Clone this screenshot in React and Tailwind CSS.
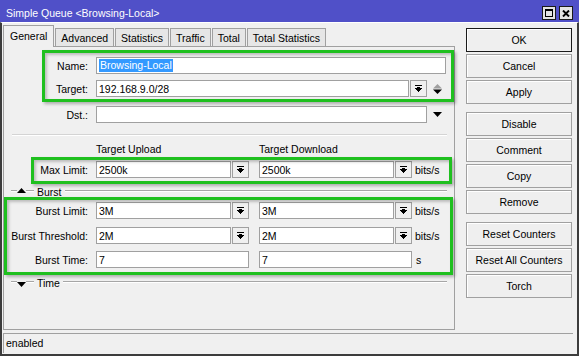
const FONT = "font-['Liberation_Sans',Arial,sans-serif]";

function DropIcon() {
  return (
    <svg width="7" height="7" viewBox="0 0 7 7" shapeRendering="crispEdges">
      <rect x="0" y="0" width="7" height="1" fill="#000" />
      <rect x="2" y="2" width="3" height="1" fill="#000" />
      <rect x="0" y="3" width="7" height="1" fill="#000" />
      <rect x="1" y="4" width="5" height="1" fill="#000" />
      <rect x="2" y="5" width="3" height="1" fill="#000" />
      <rect x="3" y="6" width="1" height="1" fill="#000" />
    </svg>
  );
}

function DropBtn() {
  return (
    <div className="ml-[1px] w-[17px] h-[17px] shrink-0 border border-[#a0a0a0] bg-[#f0f0f0] flex items-center justify-center">
      <DropIcon />
    </div>
  );
}

function Field({ className, children }) {
  return (
    <div
      className={`h-[17px] shrink-0 bg-white border border-[#a0a0a0] pl-[2px] flex items-center whitespace-nowrap overflow-hidden ${className}`}
    >
      {children}
    </div>
  );
}

function DropField({ value }) {
  return (
    <div className="flex w-[153px] shrink-0">
      <Field className="w-[135px]">{value}</Field>
      <DropBtn />
    </div>
  );
}

function Row({ label, className, children }) {
  return (
    <div className={`flex items-center h-[17px] shrink-0 ${className}`}>
      <div className="w-[84px] text-right shrink-0 whitespace-nowrap">{label}</div>
      <div className="ml-[8px] flex items-center">{children}</div>
    </div>
  );
}

function Etched({ className }) {
  return <div className={`h-[2px] border-t border-t-[#a6a6a6] border-b border-b-white ${className}`} />;
}

function GroupHeader({ label, up, className }) {
  return (
    <div className={`flex items-start h-[12px] shrink-0 pl-[7px] pr-[7px] ${className}`}>
      <Etched className="w-[6px] mt-[4px]" />
      {up ? (
        <svg className="mt-[2px]" width="9" height="5" viewBox="0 0 9 5">
          <polygon points="0,5 9,5 4.5,0" fill="#000" />
        </svg>
      ) : (
        <svg className="mt-[5px]" width="9" height="5" viewBox="0 0 9 5">
          <polygon points="0,0 9,0 4.5,5" fill="#000" />
        </svg>
      )}
      <Etched className="w-[8px] mt-[4px]" />
      <div className="ml-[3px]">{label}</div>
      <Etched className="flex-1 ml-[3px] mt-[4px]" />
    </div>
  );
}

function Btn({ children, def }) {
  return (
    <div
      className={`h-[24px] w-[106px] border ${def ? "border-[#1a1a1a]" : "border-[#a0a0a0]"} bg-[#efefef] shadow-[inset_1px_1px_0_#ffffff] flex items-center justify-center whitespace-nowrap`}
    >
      {children}
    </div>
  );
}

const greenBox =
  "absolute border-[3px] border-[#1fc01f] pointer-events-none shadow-[2px_2px_3px_rgba(0,0,0,0.28),inset_2px_2px_3px_rgba(0,0,0,0.22)]";

export default function App() {
  return (
    <div
      className={`${FONT} w-[579px] h-[356px] flex flex-col text-[10.5px] leading-[12px] text-black bg-[#f0f0f0] overflow-hidden`}
    >
      {/* Title bar */}
      <div className="h-[22px] shrink-0 bg-[#5050c8] flex items-start">
        <div className="pl-[6px] pt-[7px] text-white whitespace-nowrap">Simple Queue &lt;Browsing-Local&gt;</div>
        <div className="ml-auto mt-[6px] mr-[6px] flex gap-[3px]">
          <div className="w-[14px] h-[14px] border border-[#1a1a1a] bg-[#e4e4e4] flex items-center justify-center">
            <svg width="8" height="8" viewBox="0 0 8 8" shapeRendering="crispEdges">
              <rect x="0.5" y="0.5" width="7" height="7" fill="none" stroke="#000" />
              <rect x="0" y="0" width="8" height="2" fill="#000" />
            </svg>
          </div>
          <div className="w-[14px] h-[14px] border border-[#1a1a1a] bg-[#e4e4e4] flex items-center justify-center">
            <svg width="8" height="7" viewBox="0 0 8 7">
              <path d="M1 0.5 L7 6.5 M7 0.5 L1 6.5" stroke="#000" strokeWidth="1.9" />
            </svg>
          </div>
        </div>
      </div>

      {/* Body */}
      <div className="flex-1 flex flex-col border-x-2 border-b-2 border-[#3c3c3c] border-t border-t-white pt-[2px]">
        <div className="h-[305px] flex pl-[1px]">
          {/* Left column: tabs + panel */}
          <div className="w-[452px] flex flex-col">
            <div className="h-[21px] flex items-end">
              <div className="h-[22px] -mb-[1px] relative z-10 border border-b-0 border-[#a0a0a0] bg-[#f0f0f0] px-[6px] pt-[4px] whitespace-nowrap">
                General
              </div>
              {["Advanced", "Statistics", "Traffic", "Total", "Total Statistics"].map((t) => (
                <div
                  key={t}
                  className="h-[18px] ml-[1px] border border-b-0 border-[#a0a0a0] bg-[#e6e6e6] px-[5px] pt-[3px] whitespace-nowrap"
                >
                  {t}
                </div>
              ))}
            </div>

            <div className="h-[284px] relative border border-[#a0a0a0] flex flex-col">
              <Row label="Name:" className="mt-[10px]">
                <Field className="w-[350px] pl-[1px]">
                  <span className="bg-[#3399ff] text-white leading-[13px] px-[1px]">Browsing-Local</span>
                </Field>
              </Row>
              <Row label="Target:" className="mt-[6px]">
                <Field className="w-[313px]">192.168.9.0/28</Field>
                <DropBtn />
                <svg className="ml-[6px]" width="9" height="10" viewBox="0 0 9 10">
                  <polygon points="0,4.5 9,4.5 4.5,0" fill="#a0a0a0" />
                  <polygon points="0,5.5 9,5.5 4.5,10" fill="#000" />
                </svg>
              </Row>
              <Row label="Dst.:" className="mt-[9px]">
                <Field className="w-[331px]" />
                <svg className="ml-[6px]" width="9" height="5" viewBox="0 0 9 5">
                  <polygon points="0,0 9,0 4.5,5" fill="#000" />
                </svg>
              </Row>

              <div className="mt-[11px] ml-[8px] mr-[7px] h-[2px] border-t border-t-[#d4d4d4] border-b border-b-white" />

              <div className="mt-[7px] h-[12px] flex pl-[92px] whitespace-nowrap">
                <div className="w-[163px]">Target Upload</div>
                <div>Target Download</div>
              </div>

              <Row label="Max Limit:" className="mt-[6px]">
                <DropField value="2500k" />
                <div className="ml-[10px]">
                  <DropField value="2500k" />
                </div>
                <span className="ml-[3px]">bits/s</span>
              </Row>

              <GroupHeader label="Burst" up className="mt-[8px]" />

              <Row label="Burst Limit:" className="mt-[4px]">
                <DropField value="3M" />
                <div className="ml-[10px]">
                  <DropField value="3M" />
                </div>
                <span className="ml-[3px]">bits/s</span>
              </Row>
              <Row label="Burst Threshold:" className="mt-[8px]">
                <DropField value="2M" />
                <div className="ml-[10px]">
                  <DropField value="2M" />
                </div>
                <span className="ml-[3px]">bits/s</span>
              </Row>
              <Row label="Burst Time:" className="mt-[7px]">
                <Field className="w-[153px]">7</Field>
                <Field className="w-[153px] ml-[10px]">7</Field>
                <span className="ml-[4px]">s</span>
              </Row>

              <GroupHeader label="Time" className="mt-[9px]" />

              {/* annotation highlight boxes */}
              <div className={`${greenBox} left-[38px] top-[3px] w-[412px] h-[52px]`} />
              <div className={`${greenBox} left-[27px] top-[110px] w-[421px] h-[27px]`} />
              <div className={`${greenBox} left-0 top-[150px] w-[449px] h-[78px]`} />
            </div>
          </div>

          {/* Right column: buttons */}
          <div className="ml-[11px] pt-[3px] flex flex-col">
            <div className="flex flex-col gap-[2px]">
              <Btn def>OK</Btn>
              <Btn>Cancel</Btn>
              <Btn>Apply</Btn>
            </div>
            <div className="mt-[8px] flex flex-col gap-[2px]">
              <Btn>Disable</Btn>
              <Btn>Comment</Btn>
              <Btn>Copy</Btn>
              <Btn>Remove</Btn>
            </div>
            <div className="mt-[8px] flex flex-col gap-[2px]">
              <Btn>Reset Counters</Btn>
              <Btn>Reset All Counters</Btn>
              <Btn>Torch</Btn>
            </div>
          </div>
        </div>

        {/* Status bar */}
        <div className="mt-[3px] ml-[1px] w-[570px] h-[20px] border-t border-l border-[#a0a0a0] pl-[2px] pt-[3px]">
          enabled
        </div>
      </div>
    </div>
  );
}
